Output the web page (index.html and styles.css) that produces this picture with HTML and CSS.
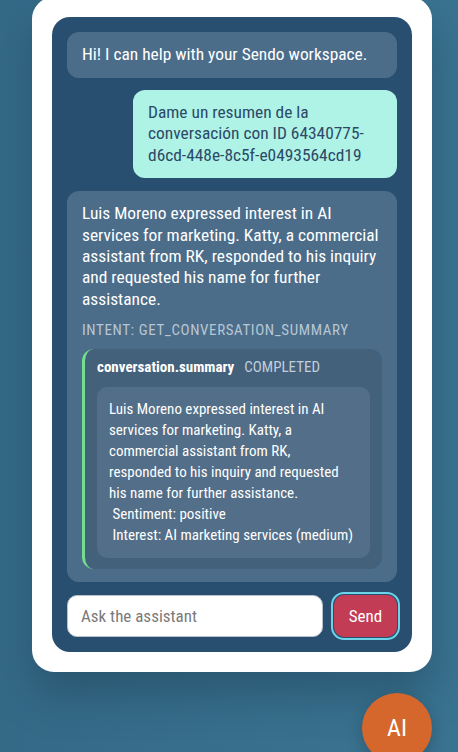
FILE: index.html
```
<!DOCTYPE html>
<html>
<head>
<meta charset="utf-8">
<link rel="stylesheet" href="styles.css">
</head>
<body>
<div class="widget">
  <div class="card">
    <div class="panel">
      <div class="messages">
        <div class="bubble bot greeting">Hi! I can help with your Sendo workspace.</div>
        <div class="bubble user">Dame un resumen de la conversación con ID 64340775-d6cd-448e-8c5f-e0493564cd19</div>
        <div class="bubble bot summary">
          <div class="summary-text">Luis Moreno expressed interest in AI services for marketing. Katty, a commercial assistant from RK, responded to his inquiry and requested his name for further assistance.</div>
          <div class="intent">INTENT: GET_CONVERSATION_SUMMARY</div>
          <div class="tool">
            <div class="tool-head"><span class="tool-name">conversation.summary</span><span class="tool-status">COMPLETED</span></div>
            <div class="tool-body">Luis Moreno expressed interest in AI
services for marketing. Katty, a
commercial assistant from RK,
responded to his inquiry and requested
his name for further assistance.
 Sentiment: positive
 Interest: AI marketing services (medium)</div>
          </div>
        </div>
      </div>
      <form class="composer">
        <input class="ask" type="text" placeholder="Ask the assistant">
        <button class="send" type="button">Send</button>
      </form>
    </div>
  </div>
  <div class="fab-row"><div class="fab">AI</div></div>
</div>
</body>
</html>
```
FILE: styles.css
```
html, body {
  margin: 0;
  padding: 0;
  height: 100%;
  overflow: hidden;
}
body {
  background: linear-gradient(90deg, #356a87 0%, #386f8c 50%, #3a7390 100%);
  font-family: "Roboto Condensed", Roboto, "Liberation Sans Narrow", sans-serif;
  font-stretch: condensed;
}
.widget {
  width: 400px;
  margin: -3px 0 0 32px;
}
.card {
  background: #ffffff;
  border-radius: 22px;
  padding: 20px;
  box-shadow: 0 24px 40px rgba(20, 50, 70, 0.35);
}
.panel {
  background: #284f70;
  border-radius: 18px;
  padding: 15px;
  display: flex;
  flex-direction: column;
  gap: 13px;
}
.messages {
  display: flex;
  flex-direction: column;
  gap: 12px;
}
.bubble {
  border-radius: 12px;
  padding: 12px 15px;
  font-size: 17.4px;
  line-height: 21.4px;
}
.greeting {
  padding-bottom: 12.6px;
}
.bot {
  background: #4b6d8a;
  color: #ffffff;
}
.user {
  background: #aef3e6;
  color: #2c4966;
  align-self: flex-end;
  width: 234px;
}
.summary {
  margin-top: 1px;
  padding-bottom: 13px;
}
.intent {
  margin-top: 10px;
  font-size: 15px;
  line-height: 20px;
  letter-spacing: 0.6px;
  color: #b8c6d4;
}
.tool {
  margin-top: 9px;
  background: #44617c;
  border-left: 3px solid #72de8e;
  border-radius: 12px;
  padding: 8px 12px 11px 12px;
}
.tool-head {
  display: flex;
  gap: 10px;
  font-size: 15px;
  line-height: 20px;
}
.tool-name {
  font-weight: 700;
  color: #ffffff;
}
.tool-status {
  color: #c2cedb;
}
.tool-body {
  margin-top: 10px;
  background: #536e88;
  border-radius: 10px;
  padding: 12px 12px;
  font-size: 15px;
  line-height: 21px;
  color: #ffffff;
  white-space: pre-wrap;
}
.composer {
  display: flex;
  align-items: center;
  gap: 11px;
  margin: 0;
}
.ask {
  flex: 1;
  min-width: 0;
  height: 42px;
  box-sizing: border-box;
  border: 1px solid #b9c2cc;
  border-radius: 10px;
  background: #ffffff;
  padding: 0 13px;
  font-family: "Roboto Condensed", Roboto, sans-serif;
  font-stretch: condensed;
  font-size: 17px;
  color: #333;
}
.ask::placeholder {
  color: #7a7a7a;
}
.send {
  width: 63px;
  height: 42px;
  border: none;
  border-radius: 10px;
  background: #c33c56;
  color: #ffffff;
  font-family: "Roboto Condensed", Roboto, sans-serif;
  font-stretch: condensed;
  font-size: 17px;
  outline: 2px solid #6cd3e9;
  outline-offset: 1px;
}
.fab-row {
  display: flex;
  justify-content: flex-end;
  margin-top: 21px;
}
.fab {
  width: 70px;
  height: 70px;
  border-radius: 50%;
  background: #d6672c;
  color: #ffffff;
  font-size: 24px;
  display: flex;
  align-items: center;
  justify-content: center;
  box-shadow: 0 6px 16px rgba(0, 0, 0, 0.2);
}
```
